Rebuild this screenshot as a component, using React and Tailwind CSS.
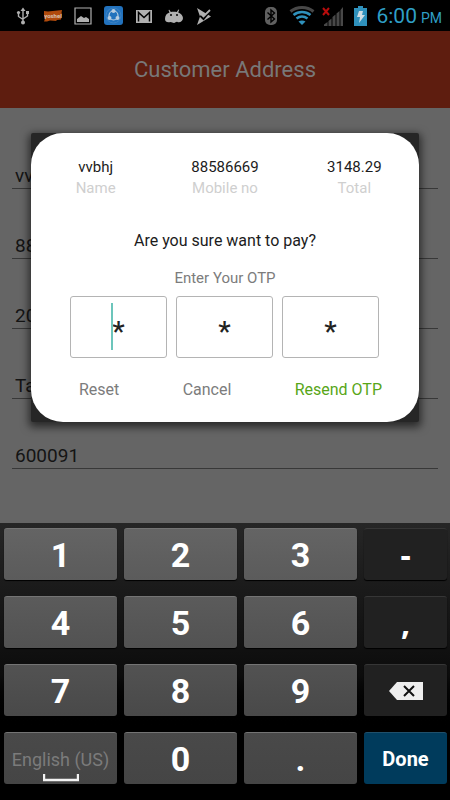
import React from 'react';

const details = [
  { label: 'Name', value: 'vvbhj' },
  { label: 'Mobile no', value: '88586669' },
  { label: 'Total', value: '3148.29' },
];

const fields = [
  { id: 'name', label: 'Name', value: 'vvbhj' },
  { id: 'mobile', label: 'Mobile', value: '88586669' },
  { id: 'street', label: 'Street', value: '20' },
  { id: 'state', label: 'State', value: 'Tamil Nadu' },
  { id: 'pincode', label: 'Pincode', value: '600091' },
];

// Keyboard rows, each with its own shade so the pad darkens downwards
const rows = [
  { keys: ['1', '2', '3'], shade: 'from-[#646464] to-[#5b5b5b]' },
  { keys: ['4', '5', '6'], shade: 'from-[#5b5b5b] to-[#525252]' },
  { keys: ['7', '8', '9'], shade: 'from-[#525252] to-[#494949]' },
  { keys: ['space', '0', '.'], shade: 'from-[#494949] to-[#454545]' },
];

const StatusIcons = () => (
  <div className="flex items-center gap-3 text-[#b0b0b0]">
    <svg className="h-[18px] w-[18px]" viewBox="0 0 18 18" fill="none" stroke="currentColor" strokeWidth="1.4">
      <path d="M9 3v12M4.500 6v3.500L9 12.500M13.500 6v3L9 12" />
      <path d="M9 .5l2.500 3.500h-5z" fill="currentColor" stroke="none" />
      <circle cx="9" cy="15.500" r="2" fill="currentColor" stroke="none" />
      <circle cx="4.500" cy="5.500" r="1.600" fill="currentColor" stroke="none" />
      <path d="M12 4h3v3h-3z" fill="currentColor" stroke="none" />
    </svg>
    <svg className="h-[18px] w-[18px]" viewBox="0 0 18 18">
      <path d="M0 4l4 .5L18 3l-.5 3 .5 1-1 5.500-4 .5-1 1-6-.5-3 1H0l1-3-1-1z" fill="#b04a0c" />
      <text x="9" y="11" textAnchor="middle" fontSize="6" fontWeight="700" fontFamily="Roboto, sans-serif" fill="#d8c4b4">yoshel</text>
    </svg>
    <svg className="h-[18px] w-[18px]" viewBox="0 0 18 18">
      <path d="M1 1h16v16H1z" fill="none" stroke="currentColor" strokeWidth="1.200" />
      <path d="M3 15v-3l4-3 3 2 2-1 3 2v3z" fill="currentColor" />
    </svg>
    <svg className="h-[19px] w-[19px]" viewBox="0 0 19 19">
      <rect width="19" height="19" rx="3" fill="#2272bd" />
      <circle cx="9.500" cy="9.500" r="7.500" fill="none" stroke="#3d82c4" />
      <circle cx="9.500" cy="9.500" r="4.500" fill="none" stroke="#b8cde0" strokeWidth="1.200" />
      <circle cx="9.500" cy="5" r="2" fill="#b8cde0" />
      <circle cx="5.500" cy="12" r="2" fill="#b8cde0" />
      <circle cx="13.500" cy="12" r="2" fill="#b8cde0" />
    </svg>
    <svg className="h-[18px] w-[18px]" viewBox="0 0 18 18">
      <path d="M1 3h16v13H1z" fill="currentColor" />
      <path d="M3.500 14.500v-9L9 10.500l5.500-5v9" fill="none" stroke="#000" strokeWidth="1.500" />
    </svg>
    <svg className="h-[18px] w-[18px]" viewBox="0 0 18 18">
      <path d="M0 12C0 8.500 1.500 6.500 4.500 5.500L3.500 3l.8-.3L5.800 5c2-.5 4-.5 6 0l1.600-2.500.8.3-1 2.700c3 1 4.500 3 4.800 5.500C18 14 15 16 12.500 15c-1.500-.6-2 1-3.500 1s-2-1-3.500-1C3 15.500 0 15.500 0 12z" fill="currentColor" />
      <circle cx="6" cy="8" r="1" fill="#000" />
      <circle cx="12" cy="8" r="1" fill="#000" />
    </svg>
    <svg className="h-[18px] w-[18px]" viewBox="0 0 18 18">
      <path d="M2 1l14 8.500L2 18l3-8.500z" fill="currentColor" />
      <path d="M5.500 8.500l3 3 5-6" fill="none" stroke="#000" strokeWidth="2.600" />
      <path d="M5.500 6.500l3 3L15 3" fill="none" stroke="currentColor" strokeWidth="1.800" />
    </svg>
  </div>
);

const SystemIcons = () => (
  <div className="flex items-center">
    <svg className="mr-2 h-5 w-5" viewBox="0 0 20 20">
      <rect x="4" y="1" width="12" height="18" rx="5" fill="#606060" />
      <path d="M6.500 6.500l7 6.500-3.500 3V4l3.500 3-7 6.500" fill="none" stroke="#000" strokeWidth="1.400" />
    </svg>
    <svg className="mr-[7px] h-5 w-[26px]" viewBox="0 0 26 20" fill="none" strokeWidth="3">
      <path d="M1.500 5.500C8 .3 18 .3 24.500 5.500" stroke="#484848" />
      <path d="M4.500 9c5-4 12-4 17 0M7.500 12.500c3.500-2.600 7.500-2.600 11 0" stroke="#2f91bc" strokeWidth="2.600" />
      <path d="M9.500 15.500c2-1.300 5-1.300 7 0L13 19z" fill="#2f91bc" />
    </svg>
    <svg className="mr-[11px] h-5 w-[21px]" viewBox="0 0 21 20">
      <path d="M2 20v-1.500l3.500-2.500v4zM6.500 20v-5l3-2.500V20zM10.500 20v-9l3-2.500V20zM14.500 20V7.500l3-2.500v15zM18.500 20V4L21 1v19z" fill="#484848" />
      <path d="M1 2l6 7M7 2L1 9" stroke="#b80c0c" strokeWidth="2" />
    </svg>
    <svg className="mr-[9px] h-5 w-[13px]" viewBox="0 0 13 20">
      <path d="M4 0h5v2h4v18H0V2h4z" fill="#2f91bc" />
      <path d="M5 5h4l-1 4h3l-6 8 1-6H3z" fill="#cfdde4" />
    </svg>
    <p className="flex items-baseline gap-1 text-[#2f9fc6]">
      <span className="text-[21px] leading-7">6:00</span>
      <span className="text-sm">PM</span>
    </p>
  </div>
);

const Key = ({ children, className, ...rest }) => (
  <button
    type="button"
    className={`flex h-[52px] items-center justify-center rounded-[3px] border-t shadow-[0_1px_1px_#000] font-bold text-white ${className}`}
    {...rest}
  >
    {children}
  </button>
);

const SpaceKey = () => (
  <span className="relative text-lg font-normal text-[#7b7b7b]">
    English (US)
    <svg className="absolute inset-x-0 top-7 mx-auto h-2 w-9" viewBox="0 0 36 8">
      <path d="M1 0v6h34V0" fill="none" stroke="#f2f2f2" strokeWidth="2.400" />
    </svg>
  </span>
);

const DeleteIcon = () => (
  <svg className="h-[18px] w-[34px]" viewBox="0 0 34 18">
    <path d="M0 9l8-9h26v18H8z" fill="#eee" />
    <path d="M15 4l10 10M25 4L15 14" stroke="#111" strokeWidth="2" />
  </svg>
);

const Keyboard = () => {
  const dark = 'border-[#363636] bg-[#212121]';
  const sideKeys = [
    <Key key="dash" className={`text-[32px] ${dark}`}>-</Key>,
    <Key key="comma" className={`text-[32px] ${dark}`}>,</Key>,
    <Key key="delete" aria-label="Delete" className={dark}><DeleteIcon /></Key>,
    <Key key="done" className="border-[#20506b] bg-[#003b5c] font-[Roboto,sans-serif] text-xl">Done</Key>,
  ];

  return (
    <section className="grid grid-cols-[113fr_113fr_113fr_83fr] gap-x-[7px] gap-y-4 bg-linear-to-b from-[#262626] via-[#0c0c0c] via-55% to-black to-75% pt-[5px] pr-[3px] pb-4 pl-1 font-['Noto_Sans',sans-serif]">
      {rows.map((row, i) => (
        <React.Fragment key={i}>
          {row.keys.map((k) => (
            <Key key={k} className={`border-[#747474] bg-linear-to-b pt-[2px] font-[Roboto,sans-serif] text-[34px] ${row.shade}`}>
              {k === 'space' ? <SpaceKey /> : k}
            </Key>
          ))}
          {sideKeys[i]}
        </React.Fragment>
      ))}
    </section>
  );
};

const OtpDialog = () => (
  <div className="absolute inset-0 flex items-center px-[31px]">
    <div role="dialog" aria-label="Confirm payment" className="w-full rounded-xs bg-[#262626] shadow-[0_3px_9px_2px_rgba(0,0,0,0.6)]">
      <div className="rounded-[32px] bg-white pt-6 pb-[22px]">
        <dl className="grid grid-cols-3 text-center text-[15px]">
          {details.map((d) => (
            <div key={d.label} className="flex flex-col-reverse">
              <dt className="leading-[22px] text-[#cfcfcf]">{d.label}</dt>
              <dd className="leading-5 text-[#1c1c1c]">{d.value}</dd>
            </div>
          ))}
        </dl>
        <p className="mt-8 text-center text-base leading-5 text-[#1c1c1c]">Are you sure want to pay?</p>
        <p className="mt-[17px] text-center text-[15px] leading-5 text-[#7c7c7c]">Enter Your OTP</p>
        <div className="mt-2 grid grid-cols-3 gap-[9px] pr-10 pl-[39px]">
          {[1, 2, 3].map((n) => (
            <div key={n} className="relative">
              <input
                aria-label={`OTP digit ${n}`}
                defaultValue="*"
                maxLength={1}
                className="h-[62px] w-full rounded-[3px] border border-[#b4b4b4] pt-[10px] text-center text-[28px] font-medium text-[#222] outline-none"
              />
              {n === 1 && <span className="absolute top-[7px] right-[54px] h-[47px] w-[2px] bg-[#6cc5bb]" />}
            </div>
          ))}
        </div>
        <div className="mt-[22px] flex justify-between pr-[37px] pl-12 text-base leading-5 text-[#7c7c7c]">
          <button type="button">Reset</button>
          <button type="button">Cancel</button>
          <button type="button" className="text-[#58a618]">Resend OTP</button>
        </div>
      </div>
    </div>
  </div>
);

const App = () => (
  <div className="flex min-h-screen flex-col bg-black font-[Roboto,sans-serif]">
    <div className="flex h-[31px] items-center justify-between pr-2 pl-[14px]">
      <StatusIcons />
      <SystemIcons />
    </div>
    <main className="relative flex grow flex-col bg-[#656565]">
      <header className="flex h-[77px] items-center justify-center bg-[#5e1d0f]">
        <h1 className="text-[22px] text-[#787878]">Customer Address</h1>
      </header>
      <form className="px-3 pt-[11px]">
        {fields.map((f) => (
          <div key={f.id} className="flex h-[70px] flex-col justify-end">
            <label htmlFor={f.id} className="sr-only">{f.label}</label>
            <input
              id={f.id}
              defaultValue={f.value}
              className="h-[26px] w-full border-b border-[#383838] px-[3px] text-[19px] leading-6 text-[#141414] outline-none"
            />
          </div>
        ))}
      </form>
      <OtpDialog />
    </main>
    <Keyboard />
  </div>
);

export default App;
